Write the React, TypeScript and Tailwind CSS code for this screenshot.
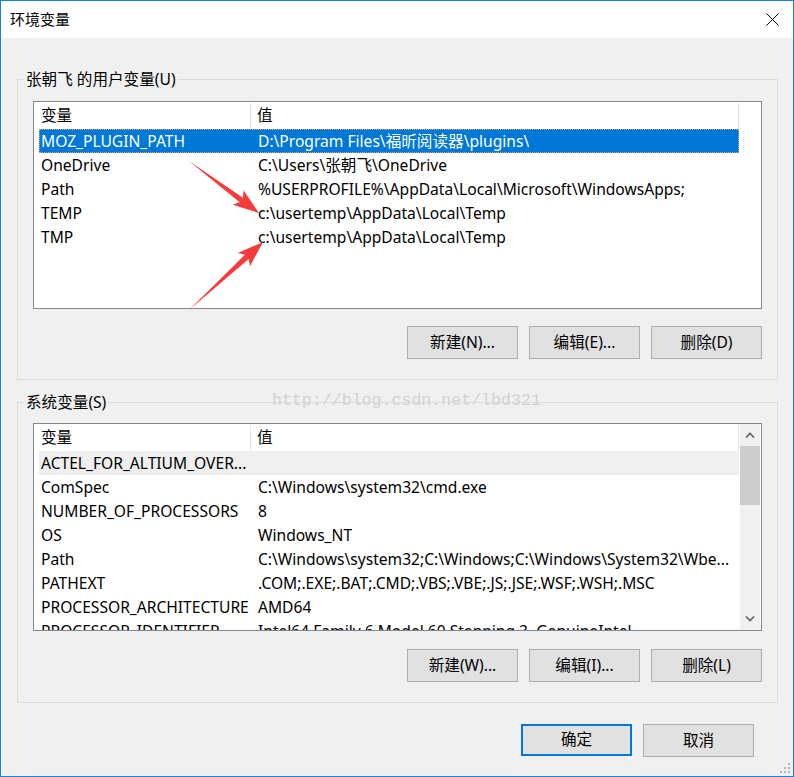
import React from "react";

const userVars: [string, string][] = [
  ["MOZ_PLUGIN_PATH", "D:\\Program Files\\福昕阅读器\\plugins\\"],
  ["OneDrive", "C:\\Users\\张朝飞\\OneDrive"],
  ["Path", "%USERPROFILE%\\AppData\\Local\\Microsoft\\WindowsApps;"],
  ["TEMP", "c:\\usertemp\\AppData\\Local\\Temp"],
  ["TMP", "c:\\usertemp\\AppData\\Local\\Temp"],
];

const sysVars: [string, string][] = [
  ["ACTEL_FOR_ALTIUM_OVER...", ""],
  ["ComSpec", "C:\\Windows\\system32\\cmd.exe"],
  ["NUMBER_OF_PROCESSORS", "8"],
  ["OS", "Windows_NT"],
  ["Path", "C:\\Windows\\system32;C:\\Windows;C:\\Windows\\System32\\Wbe..."],
  ["PATHEXT", ".COM;.EXE;.BAT;.CMD;.VBS;.VBE;.JS;.JSE;.WSF;.WSH;.MSC"],
  ["PROCESSOR_ARCHITECTURE", "AMD64"],
  ["PROCESSOR_IDENTIFIER", "Intel64 Family 6 Model 60 Stepping 3, GenuineIntel"],
];

// red annotation arrow, tail thin and head notched
function arrowPoints(x1: number, y1: number, x2: number, y2: number) {
  const dx = x2 - x1;
  const dy = y2 - y1;
  const len = Math.hypot(dx, dy);
  const ux = dx / len;
  const uy = dy / len;
  const nx = -uy;
  const ny = ux;
  const hl = 22;
  const hw = 9;
  const sw = 2.8;
  const bx = x2 - ux * hl;
  const by = y2 - uy * hl;
  const pts = [
    [x1, y1],
    [bx + nx * sw, by + ny * sw],
    [bx - ux * 4 + nx * hw, by - uy * 4 + ny * hw],
    [x2, y2],
    [bx - ux * 4 - nx * hw, by - uy * 4 - ny * hw],
    [bx - nx * sw, by - ny * sw],
  ];
  return pts.map((p) => p.join(",")).join(" ");
}

function Chevron({ up }: { up?: boolean }) {
  return (
    <svg width="10" height="6" viewBox="0 0 10 6">
      <path
        d={up ? "M1 5.5 L5 1.5 L9 5.5" : "M1 0.5 L5 4.5 L9 0.5"}
        fill="none"
        stroke="#606060"
        strokeWidth="1.6"
      />
    </svg>
  );
}

function VarList({
  rows,
  selected,
  hovered,
  scroll,
}: {
  rows: [string, string][];
  selected?: number;
  hovered?: number;
  scroll?: boolean;
}) {
  return (
    <div className="h-[208px] border border-[#828790] bg-white flex overflow-hidden">
      <div className="w-[705px] pl-[5px] shrink-0">
        <div className="h-[27px] flex pt-[1px]">
          <div className="w-[212px] pl-[2px] flex items-center border-r border-[#e5e5e5]">变量</div>
          <div className="flex-1 pl-[6px] flex items-center border-r border-[#e5e5e5]">值</div>
        </div>
        {rows.map(([name, value], i) => (
          <div
            key={name + i}
            className={
              "h-[24px] pt-[2px] flex items-center whitespace-nowrap overflow-hidden " +
              (i === selected
                ? "bg-[#0078d7] text-white outline outline-1 outline-dotted outline-[#e8a35a] -outline-offset-1"
                : i === hovered
                ? "bg-[#efefef]"
                : "")
            }
          >
            <div className="w-[213px] pl-[2px] shrink-0 overflow-hidden">{name}</div>
            <div className="pl-[6px] overflow-hidden">{value}</div>
          </div>
        ))}
      </div>
      <div className="flex-1 px-[1px]">
        {scroll && (
          <div className="h-full bg-[#f0f0f0] flex flex-col">
            <div className="h-[22px] flex items-center justify-center">
              <Chevron up />
            </div>
            <div className="h-[59px] bg-[#cdcdcd]" />
            <div className="flex-1" />
            <div className="h-[22px] flex items-center justify-center">
              <Chevron />
            </div>
          </div>
        )}
      </div>
    </div>
  );
}

function Btn({ children, primary }: { children: React.ReactNode; primary?: boolean }) {
  return (
    <div
      className={
        "w-[111px] flex items-center justify-center bg-[#e1e1e1] " +
        (primary ? "h-[32px] border-2 border-[#0078d7]" : "h-[33px] border border-[#adadad]")
      }
    >
      {children}
    </div>
  );
}

function Group({ title, children, className }: { title: string; children: React.ReactNode; className?: string }) {
  return (
    <fieldset className={"border border-[#dcdcdc] p-0 m-0 " + (className ?? "")}>
      <legend className="ml-[6px] px-[2px] leading-[20px]">{title}</legend>
      <div className="px-[15px] pb-[20px]">{children}</div>
    </fieldset>
  );
}

export default function App() {
  return (
    <div className="w-[794px] h-[777px] border border-[#1883d7] bg-[#f0f0f0] relative flex flex-col text-[15.6px] text-black font-['Noto_Sans','Noto_Sans_CJK_SC',sans-serif]">
      <div className="h-[37px] bg-white flex items-center justify-between pl-[9px] pr-[14px]">
        <span className="text-[15px]">环境变量</span>
        <svg width="13" height="13" viewBox="0 0 13 13">
          <path d="M0.5 0.5 L12.5 12.5 M12.5 0.5 L0.5 12.5" stroke="#000" strokeWidth="1" />
        </svg>
      </div>

      <div className="flex-1 pl-[16px] pr-[15px]">
        <Group title="张朝飞 的用户变量(U)" className="mt-[31px]">
          <div className="mt-[12px]">
            <VarList rows={userVars} selected={0} />
          </div>
          <div className="mt-[17px] flex justify-end gap-[11px]">
            <Btn>新建(N)...</Btn>
            <Btn>编辑(E)...</Btn>
            <Btn>删除(D)</Btn>
          </div>
        </Group>

        <Group title="系统变量(S)" className="mt-[12px]">
          <div className="mt-[11px]">
            <VarList rows={sysVars} hovered={0} scroll />
          </div>
          <div className="mt-[18px] flex justify-end gap-[11px]">
            <Btn>新建(W)...</Btn>
            <Btn>编辑(I)...</Btn>
            <Btn>删除(L)</Btn>
          </div>
        </Group>

        <div className="mt-[21px] pr-[24px] flex justify-end gap-[11px]">
          <Btn primary>确定</Btn>
          <Btn>取消</Btn>
        </div>
      </div>

      <div className="absolute left-[271px] top-[388px] text-[16.6px] text-[#d2d2d2] font-['Liberation_Mono',monospace] pointer-events-none">
        http://blog.csdn.net/lbd321
      </div>

      <svg className="absolute right-[2px] bottom-[2px]" width="12" height="12" viewBox="0 0 12 12">
        {[
          [9, 1],
          [5, 5],
          [9, 5],
          [1, 9],
          [5, 9],
          [9, 9],
        ].map(([x, y]) => (
          <rect key={x + "-" + y} x={x} y={y} width="2" height="2" fill="#b8b8b8" />
        ))}
      </svg>

      <svg className="absolute left-[-1px] top-[-1px] pointer-events-none" width="794" height="777">
        <polygon points={arrowPoints(189, 161, 259, 213)} fill="#f53b3b" />
        <polygon points={arrowPoints(189, 310, 263, 242)} fill="#f53b3b" />
      </svg>
    </div>
  );
}
